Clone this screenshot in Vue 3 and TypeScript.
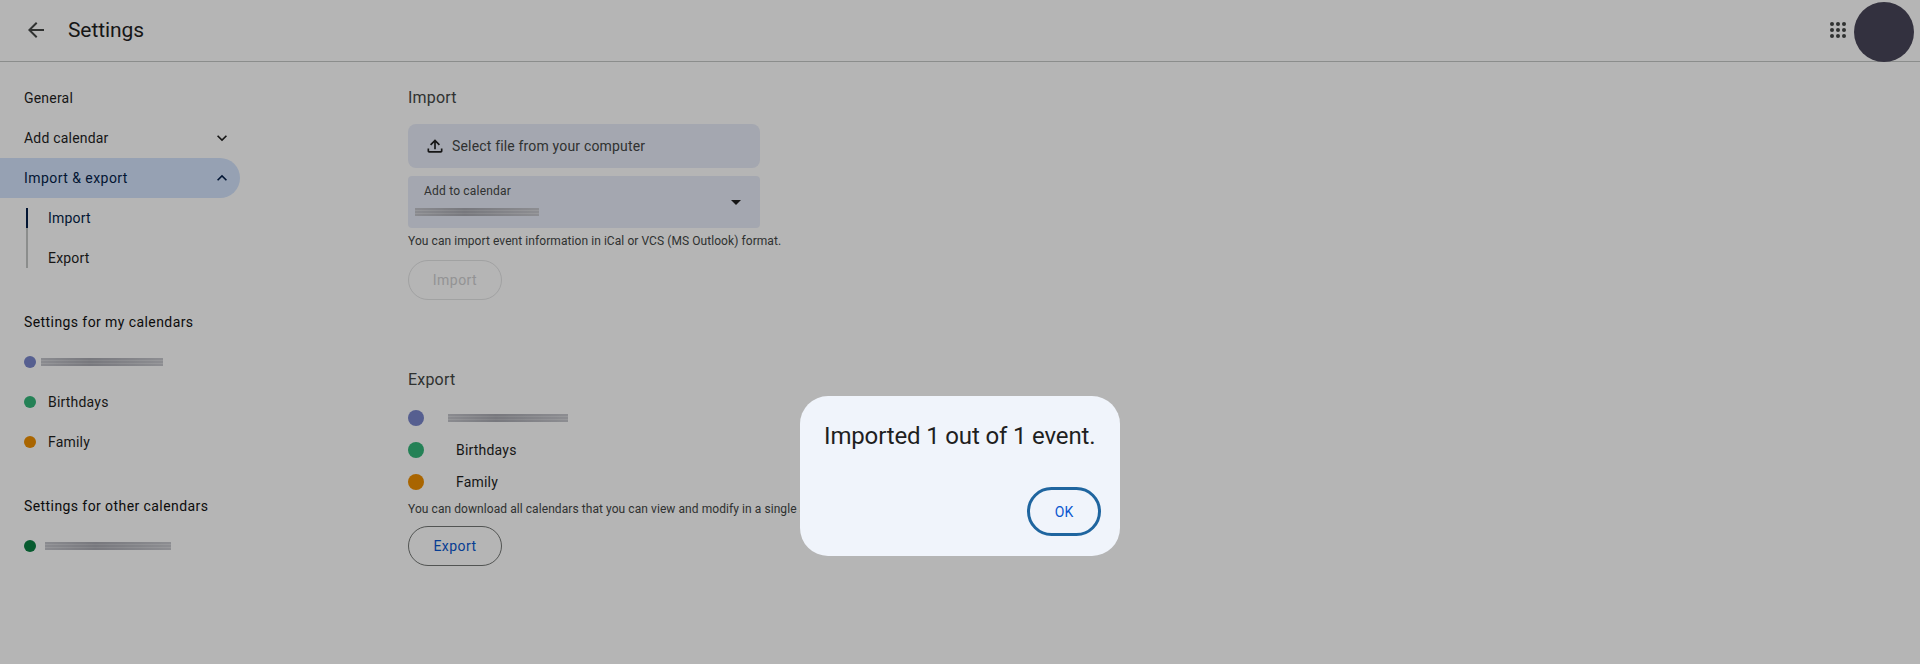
<script setup lang="ts">
interface Cal { name: string; color: string; blurred?: boolean }
const myCals: Cal[] = [
  { name: '', color: '#7986cb', blurred: true },
  { name: 'Birthdays', color: '#33b679' },
  { name: 'Family', color: '#ef8f00' },
]
</script>

<template>
  <div class="page">
    <header class="top">
      <svg class="back" width="24" height="24" viewBox="0 0 24 24"><path d="M20 11H7.830l5.590-5.590L12 4l-8 8 8 8 1.410-1.410L7.830 13H20v-2z" /></svg>
      <span class="title">Settings</span>
      <span class="spacer"></span>
      <svg class="apps" width="24" height="24" viewBox="0 0 24 24">
        <g v-for="y in [6, 12, 18]" :key="y">
          <circle v-for="x in [6, 12, 18]" :key="x" :cx="x" :cy="y" r="2" />
        </g>
      </svg>
      <span class="avatar"></span>
    </header>

    <div class="body">
      <nav class="side">
        <div class="row">General</div>
        <div class="row between">
          <span>Add calendar</span>
          <svg width="20" height="20" viewBox="0 0 24 24"><path d="M7.410 8.590 12 13.170l4.590-4.580L18 10l-6 6-6-6z" /></svg>
        </div>
        <div class="row between active">
          <span>Import &amp; export</span>
          <svg width="20" height="20" viewBox="0 0 24 24"><path d="M7.410 15.410 12 10.830l4.590 4.580L18 14l-6-6-6 6z" /></svg>
        </div>
        <div class="subs">
          <div class="sub sub-on">Import</div>
          <div class="sub">Export</div>
        </div>

        <div class="row heading first">Settings for my calendars</div>
        <div v-for="c in myCals" :key="c.color" class="row">
          <span class="dot" :style="{ background: c.color }"></span>
          <span v-if="c.blurred" class="smear smear-a"></span>
          <span v-else class="cal-name">{{ c.name }}</span>
        </div>

        <div class="row heading second">Settings for other calendars</div>
        <div class="row">
          <span class="dot" style="background: #0b8043"></span>
          <span class="smear smear-b"></span>
        </div>
      </nav>

      <main class="main">
        <section class="import">
          <h2>Import</h2>
          <div class="file">
            <svg width="20" height="20" viewBox="0 0 24 24"><path d="M5 20h14v-2H5v2zM5 18v-3H3v3c0 1.100.9 2 2 2v-2zm14 0v2c1.100 0 2-.9 2-2v-3h-2v3zM11 16h2V7.830l3.590 3.580L18 10l-6-6-6 6 1.410 1.410L11 7.830V16z" /></svg>
            <span>Select file from your computer</span>
          </div>
          <div class="select">
            <span class="sel-label">Add to calendar</span>
            <span class="smear smear-c"></span>
            <span class="caret"></span>
          </div>
          <p class="help">You can import event information in iCal or VCS (MS Outlook) format.</p>
          <button class="btn btn-off">Import</button>
        </section>

        <section class="export">
          <h2>Export</h2>
          <div v-for="c in myCals" :key="c.color" class="exp-row">
            <span class="dot big" :style="{ background: c.color }"></span>
            <span v-if="c.blurred" class="smear smear-d"></span>
            <span v-else class="exp-name">{{ c.name }}</span>
          </div>
          <p class="help help-exp">You can download all calendars that you can view and modify in a single archive.</p>
          <button class="btn btn-on">Export</button>
        </section>
      </main>
    </div>

    <div class="scrim">
      <div class="dialog">
        <div class="msg">Imported 1 out of 1 event.</div>
        <div class="actions"><button class="ok">OK</button></div>
      </div>
    </div>
  </div>
</template>

<style scoped>
.page {
  position: relative;
  height: 664px;
  overflow: hidden;
  background: #fff;
  color: #1f1f1f;
  font-family: Roboto, "Liberation Sans", sans-serif;
  font-size: 14px;
  letter-spacing: 0.2px;
}
.top {
  height: 59px;
  padding: 0 6px 2px 24px;
  border-bottom: 1px solid #c4c7c5;
  display: flex;
  align-items: center;
  box-sizing: content-box;
}
.back { fill: #444746; flex: none; }
.title { margin-left: 20px; font-size: 21px; color: #1f1f1f; letter-spacing: -0.1px; }
.spacer { flex: 1; }
.apps { fill: #444746; margin-right: 4px; }
.avatar { width: 60px; height: 60px; flex: none; border-radius: 50%; background: #494659; margin-top: 5px; }
.body { display: flex; }
.side { width: 408px; flex: none; padding-top: 16px; }
.row {
  height: 40px;
  width: 240px;
  box-sizing: border-box;
  padding: 0 8px 0 24px;
  display: flex;
  align-items: center;
}
.between { justify-content: space-between; }
.row svg { fill: #1f1f1f; }
.active { background: #d3e3fd; border-radius: 0 20px 20px 0; color: #041e49; font-weight: 450; letter-spacing: 0.45px; }
.active svg { fill: #041e49; }
.subs { margin: 10px 0 0 26px; border-left: 2px solid #c4c7c5; height: 60px; }
.sub { height: 20px; line-height: 20px; padding-left: 20px; margin-left: -2px; border-left: 2px solid transparent; margin-bottom: 20px; }
.sub:last-child { margin-bottom: 0; }
.sub-on { border-left-color: #041e49; color: #041e49; font-weight: 450; }
.heading { font-weight: 400; letter-spacing: 0.42px; color: #111; }
.first { margin-top: 34px; }
.second { margin-top: 24px; }
.dot { width: 12px; height: 12px; border-radius: 50%; flex: none; }
.big { width: 16px; height: 16px; }
.cal-name { margin-left: 12px; }
.smear {
  display: block;
  height: 8px;
  filter: blur(0.7px);
  background:
    linear-gradient(90deg, rgba(255,255,255,0.1), rgba(90,90,100,0.2) 40%, rgba(255,255,255,0.15)),
    repeating-linear-gradient(180deg, #bdbec5 0 2px, #cfd0d5 2px 3px);
}
.smear-a { width: 122px; margin-left: 5px; }
.smear-b { width: 126px; margin-left: 9px; }
.smear-c { width: 124px; position: absolute; left: 7px; top: 32px; }
.smear-d { width: 120px; margin-left: 24px; }
.main { flex: 1; padding-top: 24px; }
h2 { margin: 0; font-size: 16px; font-weight: 400; line-height: 24px; color: #444746; }
.import { height: 282px; }
.file {
  width: 352px;
  height: 44px;
  margin-top: 14px;
  border-radius: 8px;
  background: #e8ecf8;
  display: flex;
  align-items: center;
  padding-left: 17px;
  box-sizing: border-box;
  gap: 7px;
  color: #444746;
  letter-spacing: 0.17px;
}
.file svg { fill: #1f1f1f; flex: none; }
.select {
  position: relative;
  width: 352px;
  height: 52px;
  margin-top: 8px;
  border-radius: 4px;
  background: #e8ecf8;
}
.sel-label { position: absolute; left: 16px; top: 7px; font-size: 12px; line-height: 16px; color: #444746; }
.caret {
  position: absolute;
  right: 19px;
  top: 24px;
  border-left: 5px solid transparent;
  border-right: 5px solid transparent;
  border-top: 5px solid #1f1f1f;
}
.help { margin: 5px 0 0; font-size: 12px; line-height: 16px; color: #444746; white-space: nowrap; letter-spacing: 0.07px; }
.btn {
  display: block;
  width: 94px;
  height: 40px;
  margin-top: 11px;
  border-radius: 20px;
  background: transparent;
  font: 450 14px Roboto, "Liberation Sans", sans-serif;
  letter-spacing: 0.45px;
}
.btn-off { border: 1px solid #e3e4e5; color: #cfd0d1; }
.btn-on { border: 1px solid #747775; color: #0b57d0; margin-top: 9px; }
.export h2 { margin-bottom: 10px; }
.exp-row { height: 32px; display: flex; align-items: center; }
.exp-name { margin-left: 32px; }
.help-exp { margin-top: 3px; }
.scrim {
  position: absolute;
  inset: 0;
  background: rgba(0, 0, 0, 0.29);
  padding-top: 396px;
  box-sizing: border-box;
}
.dialog {
  width: 320px;
  height: 160px;
  margin: 0 auto;
  border-radius: 28px;
  background: #f0f4fb;
  box-sizing: border-box;
  padding: 24px 19px 20px 24px;
  display: flex;
  flex-direction: column;
  justify-content: space-between;
}
.msg { font-size: 24px; line-height: 32px; color: #1f1f1f; letter-spacing: -0.15px; white-space: nowrap; }
.actions { display: flex; justify-content: flex-end; }
.ok {
  width: 74px;
  height: 49px;
  border: 3px solid #1f659f;
  border-radius: 25px;
  background: transparent;
  color: #0b57d0;
  font: 450 14px Roboto, "Liberation Sans", sans-serif;
}
</style>
